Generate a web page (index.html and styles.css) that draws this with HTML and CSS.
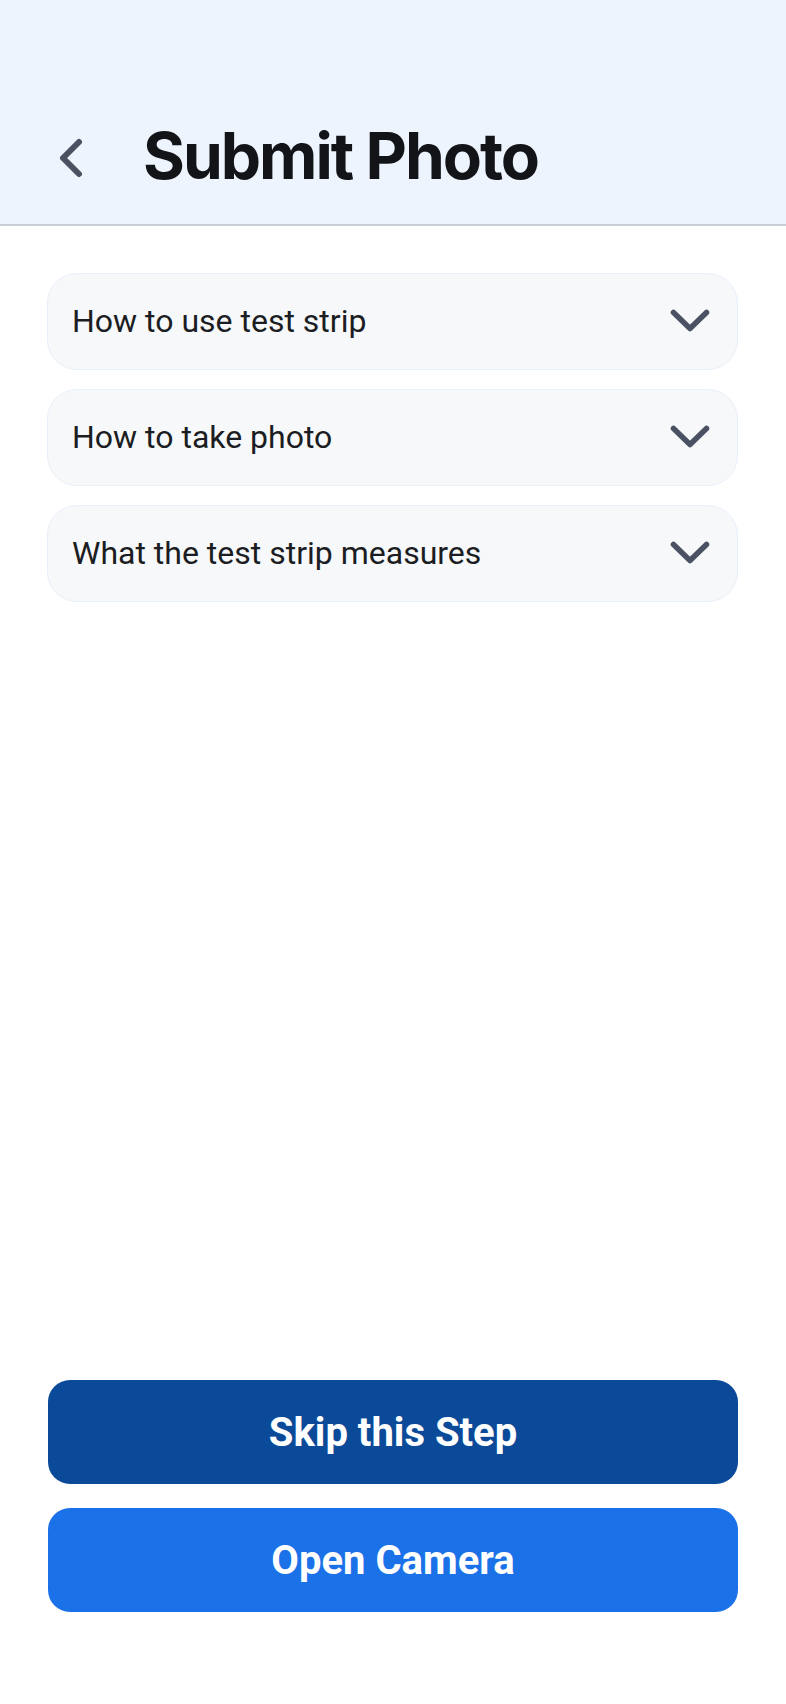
FILE: index.html
```html
<!DOCTYPE html>
<html lang="en">
<head>
    <meta charset="UTF-8">
    <meta name="viewport" content="width=device-width, initial-scale=1.0">
    <title>Submit Photo</title>
    <link rel="stylesheet" href="styles.css">
</head>
<body>
    <header class="top-bar">
        <div class="top-row">
            <button class="back-button" aria-label="Back">
                <svg width="28" height="44" viewBox="0 0 28 44">
                    <path d="M22 6 L6 22 L22 38" fill="none" stroke="#4b5161" stroke-width="6" stroke-linecap="round" stroke-linejoin="round"/>
                </svg>
            </button>
            <h1>Submit Photo</h1>
        </div>
    </header>

    <main class="content">
        <div class="faq-item">
            <span>How to use test strip</span>
            <svg class="chevron" width="44" height="28" viewBox="0 0 44 28">
                <path d="M5.5 5.5 L22 21.5 L38.5 5.5" fill="none" stroke="#4a5162" stroke-width="5.5" stroke-linecap="round" stroke-linejoin="round"/>
            </svg>
        </div>
        <div class="faq-item">
            <span>How to take photo</span>
            <svg class="chevron" width="44" height="28" viewBox="0 0 44 28">
                <path d="M5.5 5.5 L22 21.5 L38.5 5.5" fill="none" stroke="#4a5162" stroke-width="5.5" stroke-linecap="round" stroke-linejoin="round"/>
            </svg>
        </div>
        <div class="faq-item">
            <span>What the test strip measures</span>
            <svg class="chevron" width="44" height="28" viewBox="0 0 44 28">
                <path d="M5.5 5.5 L22 21.5 L38.5 5.5" fill="none" stroke="#4a5162" stroke-width="5.5" stroke-linecap="round" stroke-linejoin="round"/>
            </svg>
        </div>
    </main>

    <footer class="actions">
        <button class="button button-dark">Skip this Step</button>
        <button class="button button-light">Open Camera</button>
    </footer>
</body>
</html>
```

FILE: styles.css
```css
* {
    box-sizing: border-box;
}

body {
    margin: 0;
    padding: 0;
    min-height: 100vh;
    display: flex;
    flex-direction: column;
    background: #ffffff;
    font-family: Roboto, 'Noto Sans', sans-serif;
    color: #1b1d22;
}

.top-bar {
    height: 226px;
    padding: 111px 0 0 57px;
    background: #eef4fe;
    border-bottom: 2px solid #c9cdd5;
}

.top-row {
    display: flex;
    align-items: center;
    height: 90px;
}

.back-button {
    display: flex;
    padding: 0;
    margin: 3px 58px 0 0;
    background: none;
    border: none;
    cursor: pointer;
}

h1 {
    margin: 0;
    font-family: Inter, 'Noto Sans', sans-serif;
    font-size: 64px;
    font-weight: 700;
    letter-spacing: -2px;
    line-height: 90px;
    color: #121418;
}

.content {
    flex: 1;
    display: flex;
    flex-direction: column;
    gap: 19px;
    padding: 47px 48px 0 47px;
}

.faq-item {
    display: flex;
    align-items: center;
    justify-content: space-between;
    height: 97px;
    padding: 0 25px 2px 24px;
    background: #f6f8fa;
    border: 1px solid #e9f0fb;
    border-radius: 30px;
    font-size: 32px;
    cursor: pointer;
}

.chevron {
    flex-shrink: 0;
}

.actions {
    display: flex;
    flex-direction: column;
    gap: 24px;
    padding: 0 48px 92px 48px;
}

.button {
    height: 104px;
    border: none;
    border-radius: 22px;
    color: #ffffff;
    font-family: Roboto, 'Noto Sans', sans-serif;
    font-size: 40px;
    font-weight: 700;
    cursor: pointer;
}

.button-dark {
    background: #0b4a99;
}

.button-light {
    background: #1b71e8;
}
```
